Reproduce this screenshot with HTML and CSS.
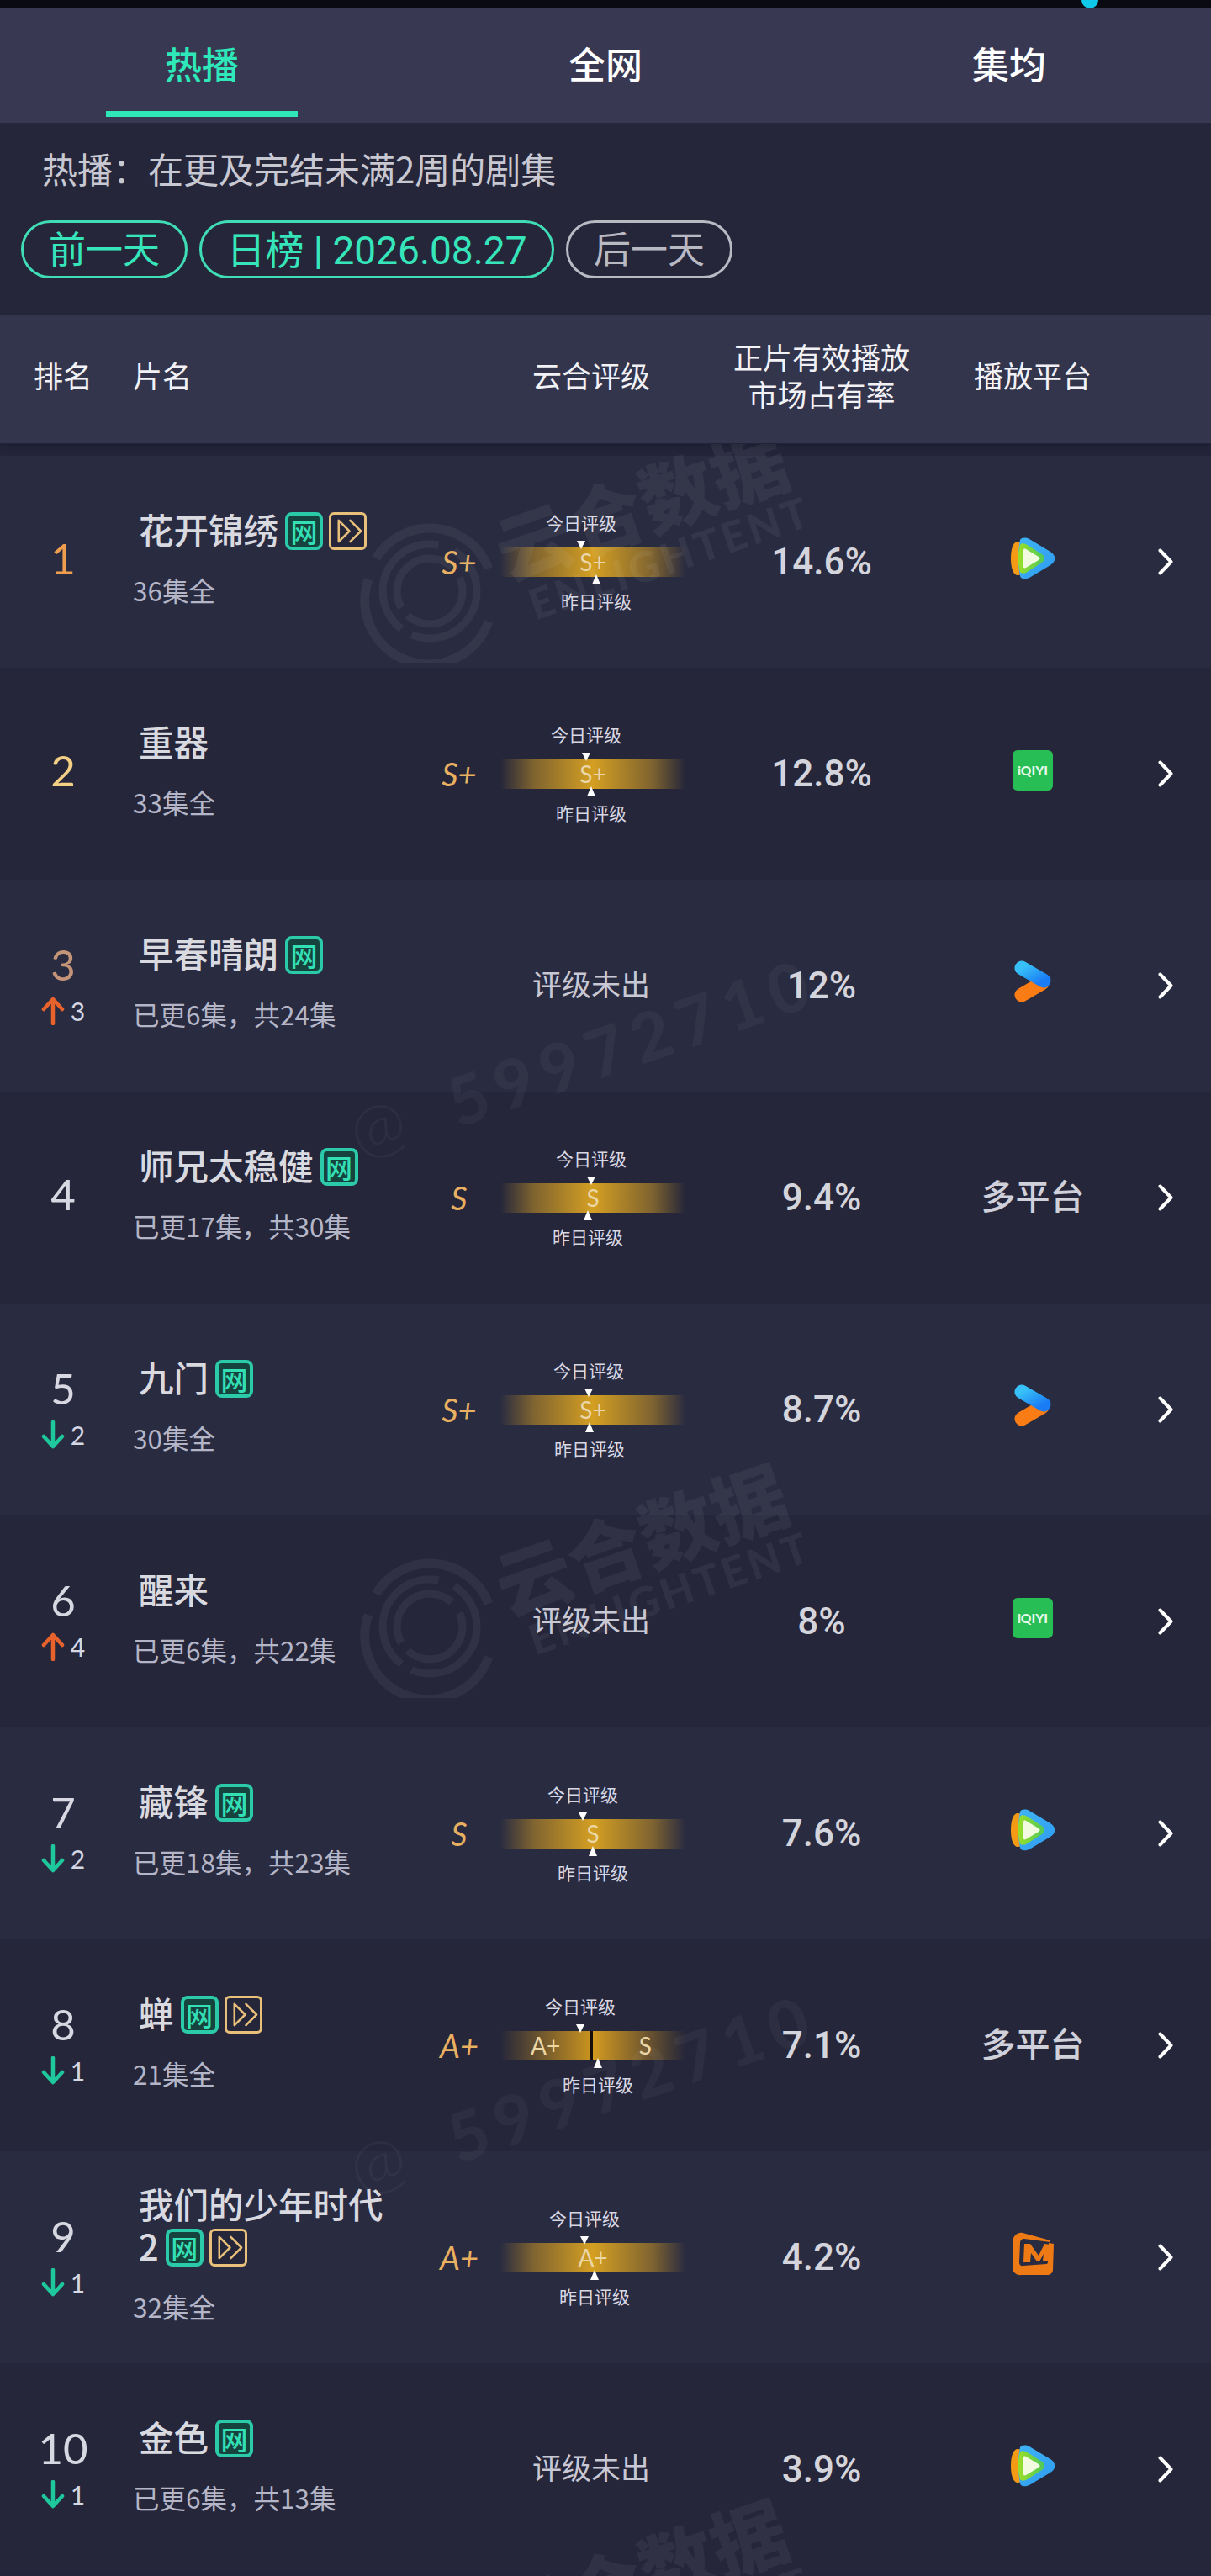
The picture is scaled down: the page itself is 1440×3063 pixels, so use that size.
FILE: index.html
```html
<!DOCTYPE html>
<html lang="zh-CN">
<head>
  <meta charset="UTF-8" />
  <title>热播榜单</title>
  <link rel="stylesheet" href="styles.css">
</head>
<body>
<svg class="defs" aria-hidden="true">
  <defs>
    <linearGradient id="tcBlue" x1="0" y1="0" x2="1" y2="1"><stop offset="0" stop-color="#3fb4f5"/><stop offset="1" stop-color="#2f9bf0"/></linearGradient>
    <linearGradient id="tcGreen" x1="0" y1="0" x2="1" y2="0"><stop offset="0" stop-color="#9adf28"/><stop offset="1" stop-color="#4fc85a"/></linearGradient>
    <linearGradient id="ykBlue" x1="0" y1="0" x2="1" y2="1"><stop offset="0" stop-color="#38c0f8"/><stop offset="1" stop-color="#1a7cf5"/></linearGradient>
    <symbol id="up" viewBox="0 0 28 34"><path d="M14 32V4M3 15 14 3l11 12" fill="none" stroke="#e8622c" stroke-width="4.500" stroke-linejoin="round" stroke-linecap="round"/></symbol>
    <symbol id="down" viewBox="0 0 28 34"><path d="M14 2v28M3 19l11 12 11-12" fill="none" stroke="#1fc79c" stroke-width="4.500" stroke-linejoin="round" stroke-linecap="round"/></symbol>
    <symbol id="skip" viewBox="0 0 40 40"><path d="M9 7l13 13L9 33ZM23 7l13 13-13 13" fill="none" stroke="#e8c07a" stroke-width="2.600" stroke-linejoin="round" stroke-linecap="round"/></symbol>
    <symbol id="chev" viewBox="0 0 18 32"><path d="M2.500 2.500 15.500 16 2.500 29.500" fill="none" stroke="#fff" stroke-width="4" stroke-linecap="round" stroke-linejoin="round"/></symbol>
    <symbol id="tencent" viewBox="0 0 54 50">
      <path d="M8 5C3 7 1 15 1 25s2 18 7 20c5 1 14-5 14-20S13 4 8 5Z" fill="#f59a14"/>
      <path d="M12 3c2-3 7-3 11-1l25 15c7 4 7 12 0 16L23 48c-5 2-10 2-11-2-3-14-3-29 0-43Z" fill="url(#tcBlue)"/>
      <path d="M12 9c1-2 4-2 7-1l19 12c4 3 4 7 0 10L19 42c-3 1-6 1-7-1-3-11-3-21 0-32Z" fill="url(#tcGreen)"/>
      <path d="M16 15c0-1 1-2 3-1l15 9c2 1 2 3 0 4l-15 9c-2 1-3 0-3-1Z" fill="#f2fbe0"/>
    </symbol>
    <symbol id="youku" viewBox="0 0 44 52">
      <path d="M9 41 33 27" fill="none" stroke="#f97c14" stroke-width="17" stroke-linecap="round"/>
      <path d="M9 9 35 24" fill="none" stroke="url(#ykBlue)" stroke-width="17" stroke-linecap="round"/>
    </symbol>
    <symbol id="mango" viewBox="0 0 50 52">
      <path d="M13 1 46 10v2L15 8c-3 0-5 2-5 5l-1 23c0 3 2 5 5 4l27-2c2 0 2-2 2-3l1-22 6 1-1 31c0 3-2 5-5 6L12 51C6 52 1 48 1 42V14C1 5 6 0 13 1Z" fill="#ee7a16"/>
      <path d="M15 14h7l10 14 7-14 7 1-2 19H37l1-8-5 9h-3l-7-10-1 11h-8Z" fill="#ee7a16"/>
    </symbol>
    <symbol id="mark" viewBox="0 0 170 170">
      <g fill="none" stroke="#fff">
        <path d="M21 46A75 75 0 0 1 155 58" stroke-width="11"/>
        <path d="M12 71A75 75 0 0 0 155 121" stroke-width="11"/>
        <circle cx="85" cy="85" r="56" stroke-width="9" stroke-dasharray="110 14 150 20"/>
        <circle cx="85" cy="85" r="39" stroke-width="9" stroke-dasharray="90 12 110 16"/>
      </g>
    </symbol>
  </defs>
</svg>

<div class="status"><i class="status-dot"></i></div>

<nav class="tabs">
  <a class="tab active">热播</a>
  <a class="tab">全网</a>
  <a class="tab">集均</a>
</nav>

<section class="intro">
  <p class="intro-text">热播：在更及完结未满2周的剧集</p>
  <div class="pills">
    <a class="pill">前一天</a>
    <a class="pill pill-date">日榜 | 2026.08.27</a>
    <a class="pill pill-off">后一天</a>
  </div>
</section>

<header class="cols">
  <div class="col-rank">排名</div>
  <div class="col-title">片名</div>
  <div class="col-rating">云合评级</div>
  <div class="col-share">正片有效播放<br>市场占有率</div>
  <div class="col-plat">播放平台</div>
</header>

<main class="list">
  <article class="cols row">
    <div class="rank"><b class="no gold1">1</b></div>
    <div class="info"><h3>花开锦绣<span class="tag tag-net">网</span><span class="tag tag-skip"><svg><use href="#skip"/></svg></span></h3><p>36集全</p></div>
    <div class="rating"><span class="grade">S+</span><div class="bar"><span>S+</span><div class="mark today" style="left:96px"><em>今日评级</em><i></i></div><div class="mark yest" style="left:114px"><i></i><em>昨日评级</em></div></div></div>
    <div class="share">14.6%</div>
    <div class="plat"><svg class="ic-tencent"><use href="#tencent"/></svg></div>
    <svg class="chev"><use href="#chev"/></svg>
  </article>

  <article class="cols row">
    <div class="rank"><b class="no gold2">2</b></div>
    <div class="info"><h3>重器</h3><p>33集全</p></div>
    <div class="rating"><span class="grade">S+</span><div class="bar"><span>S+</span><div class="mark today" style="left:102px"><em>今日评级</em><i></i></div><div class="mark yest" style="left:108px"><i></i><em>昨日评级</em></div></div></div>
    <div class="share">12.8%</div>
    <div class="plat"><span class="iqiyi">iQIYI</span></div>
    <svg class="chev"><use href="#chev"/></svg>
  </article>

  <article class="cols row">
    <div class="rank"><b class="no gold3">3</b><span class="delta"><svg><use href="#up"/></svg>3</span></div>
    <div class="info"><h3>早春晴朗<span class="tag tag-net">网</span></h3><p>已更6集，共24集</p></div>
    <div class="rating none">评级未出</div>
    <div class="share">12%</div>
    <div class="plat"><svg class="ic-youku"><use href="#youku"/></svg></div>
    <svg class="chev"><use href="#chev"/></svg>
  </article>

  <article class="cols row">
    <div class="rank"><b class="no">4</b></div>
    <div class="info"><h3>师兄太稳健<span class="tag tag-net">网</span></h3><p>已更17集，共30集</p></div>
    <div class="rating"><span class="grade">S</span><div class="bar"><span>S</span><div class="mark today" style="left:108px"><em>今日评级</em><i></i></div><div class="mark yest" style="left:104px"><i></i><em>昨日评级</em></div></div></div>
    <div class="share">9.4%</div>
    <div class="plat plat-text">多平台</div>
    <svg class="chev"><use href="#chev"/></svg>
  </article>

  <article class="cols row">
    <div class="rank"><b class="no">5</b><span class="delta"><svg><use href="#down"/></svg>2</span></div>
    <div class="info"><h3>九门<span class="tag tag-net">网</span></h3><p>30集全</p></div>
    <div class="rating"><span class="grade">S+</span><div class="bar"><span>S+</span><div class="mark today" style="left:105px"><em>今日评级</em><i></i></div><div class="mark yest" style="left:106px"><i></i><em>昨日评级</em></div></div></div>
    <div class="share">8.7%</div>
    <div class="plat"><svg class="ic-youku"><use href="#youku"/></svg></div>
    <svg class="chev"><use href="#chev"/></svg>
  </article>

  <article class="cols row">
    <div class="rank"><b class="no">6</b><span class="delta"><svg><use href="#up"/></svg>4</span></div>
    <div class="info"><h3>醒来</h3><p>已更6集，共22集</p></div>
    <div class="rating none">评级未出</div>
    <div class="share">8%</div>
    <div class="plat"><span class="iqiyi">iQIYI</span></div>
    <svg class="chev"><use href="#chev"/></svg>
  </article>

  <article class="cols row">
    <div class="rank"><b class="no">7</b><span class="delta"><svg><use href="#down"/></svg>2</span></div>
    <div class="info"><h3>藏锋<span class="tag tag-net">网</span></h3><p>已更18集，共23集</p></div>
    <div class="rating"><span class="grade">S</span><div class="bar"><span>S</span><div class="mark today" style="left:98px"><em>今日评级</em><i></i></div><div class="mark yest" style="left:110px"><i></i><em>昨日评级</em></div></div></div>
    <div class="share">7.6%</div>
    <div class="plat"><svg class="ic-tencent"><use href="#tencent"/></svg></div>
    <svg class="chev"><use href="#chev"/></svg>
  </article>

  <article class="cols row">
    <div class="rank"><b class="no">8</b><span class="delta"><svg><use href="#down"/></svg>1</span></div>
    <div class="info"><h3>蝉<span class="tag tag-net">网</span><span class="tag tag-skip"><svg><use href="#skip"/></svg></span></h3><p>21集全</p></div>
    <div class="rating"><span class="grade">A+</span><div class="bar bar-split"><span>A+</span><span>S</span><div class="mark today" style="left:95px"><em>今日评级</em><i></i></div><div class="mark yest" style="left:116px"><i></i><em>昨日评级</em></div></div></div>
    <div class="share">7.1%</div>
    <div class="plat plat-text">多平台</div>
    <svg class="chev"><use href="#chev"/></svg>
  </article>

  <article class="cols row">
    <div class="rank"><b class="no">9</b><span class="delta"><svg><use href="#down"/></svg>1</span></div>
    <div class="info"><h3>我们的少年时代2<span class="tag tag-net">网</span><span class="tag tag-skip"><svg><use href="#skip"/></svg></span></h3><p>32集全</p></div>
    <div class="rating"><span class="grade">A+</span><div class="bar"><span>A+</span><div class="mark today" style="left:100px"><em>今日评级</em><i></i></div><div class="mark yest" style="left:112px"><i></i><em>昨日评级</em></div></div></div>
    <div class="share">4.2%</div>
    <div class="plat"><svg class="ic-mango"><use href="#mango"/></svg></div>
    <svg class="chev"><use href="#chev"/></svg>
  </article>

  <article class="cols row">
    <div class="rank"><b class="no">10</b><span class="delta"><svg><use href="#down"/></svg>1</span></div>
    <div class="info"><h3>金色<span class="tag tag-net">网</span></h3><p>已更6集，共13集</p></div>
    <div class="rating none">评级未出</div>
    <div class="share">3.9%</div>
    <div class="plat"><svg class="ic-tencent"><use href="#tencent"/></svg></div>
    <svg class="chev"><use href="#chev"/></svg>
  </article>

  <!-- watermarks over the list -->
  <div class="wm" style="top:0"><svg class="wm-logo"><use href="#mark"/></svg><div class="wm-brand"><b>云合数据</b><span>ENLIGHTENT</span></div></div>
  <div class="wm" style="top:1231px"><svg class="wm-logo"><use href="#mark"/></svg><div class="wm-brand"><b>云合数据</b><span>ENLIGHTENT</span></div></div>
  <div class="wm" style="top:2462px"><svg class="wm-logo"><use href="#mark"/></svg><div class="wm-brand"><b>云合数据</b><span>ENLIGHTENT</span></div></div>
  <div class="wm-id" style="top:774px"><span>@</span>59972710</div>
  <div class="wm-id" style="top:2006px"><span>@</span>59972710</div>
</main>
</body>
</html>
```

FILE: styles.css
```css
/* Resets & page */
* { margin: 0; padding: 0; box-sizing: border-box; }
html, body {
  width: 1440px; height: 3063px; overflow: hidden;
  font-family: 'Noto Sans CJK SC', 'Noto Sans', sans-serif;
  background: #23243a; color: #fff;
}
.defs { position: absolute; width: 0; height: 0; }

/* Status strip */
.status { height: 9px; background: #0a0a12; position: relative; }
.status-dot {
  position: absolute; left: 1286px; top: -10px;
  width: 20px; height: 20px; border-radius: 50%; background: #10c8e8;
}

/* Tabs */
.tabs {
  display: grid; grid-template-columns: repeat(3, 1fr);
  height: 137px; background: #383853;
}
.tab {
  display: flex; justify-content: center;
  height: 130px; padding-top: 38px;
  font-size: 44px; line-height: 56px; font-weight: 500; color: #fff;
  position: relative;
}
.tab.active { color: #2ee8ba; }
.tab.active::after {
  content: ''; position: absolute; bottom: 0; left: 126px;
  width: 228px; height: 7px; background: #2ee8ba;
}

/* Intro block */
.intro { height: 228px; background: #25263a; padding: 26px 25px 0; }
.intro-text { font-size: 42px; line-height: 56px; color: #c8c8d2; padding-left: 25px; }
.pills { display: flex; gap: 14px; margin-top: 34px; }
.pill {
  display: flex; align-items: center; justify-content: center;
  width: 198px; height: 69px; padding-bottom: 6px;
  border: 3px solid #3fdcb6; border-radius: 35px;
  font-size: 44px; color: #36e6ba;
}
.pill-date {
  width: 422px; font-family: Roboto, 'Noto Sans CJK SC', sans-serif;
  font-size: 46px;
}
.pill-off { border-color: #b9b9c4; color: #b9b9c4; }

/* Shared columns */
.cols {
  display: grid;
  grid-template-columns: 150px 370px 330px 254px 248px 88px;
  align-items: center;
}
header.cols {
  height: 154px; padding-bottom: 10px; background: #33354d;
  border-bottom: 1px solid #22233a;
  font-size: 35px; line-height: 44px; text-align: center; color: #f2f2f6;
  box-shadow: 0 3px 6px rgba(0,0,0,.15);
  position: relative; z-index: 1;
}
header .col-title { text-align: left; padding-left: 8px; }
header .col-rating { padding-left: 36px; }

/* List */
.list { position: relative; padding-top: 14px; background: #23243a; height: 2536px; overflow: hidden; }
.row { height: 252px; }
.row:nth-of-type(odd) { background: #292b40; }
.row:nth-of-type(even) { background: #25263a; }

/* Rank */
.rank { display: flex; flex-direction: column; align-items: center; }
.no { font-family: Lato, sans-serif; font-weight: 400; font-size: 51px; line-height: 50px; color: #d8d8e2; }
.no:only-child { margin-bottom: 8px; }
.gold1 { color: #ef9d4e; }
.gold2 { color: #f4cf86; }
.gold3 { color: #c49478; }
.delta {
  display: flex; align-items: center; gap: 7px; margin-top: 10px;
  font-family: Lato, sans-serif; font-size: 30px; line-height: 40px; color: #d5d7e4;
}
.delta svg { width: 28px; height: 34px; }

/* Title */
.info { padding: 0 0 12px 8px; }
.info h3 {
  width: 305px; padding-left: 7px;
  font-size: 41.500px; line-height: 50px; font-weight: 500; color: #d9d9e0;
}
.info p { margin-top: 27px; font-size: 31.500px; line-height: 40px; color: #b4b5c6; }
.tag {
  display: inline-flex; align-items: center; justify-content: center;
  width: 45px; height: 45px; margin: 5px 0 0 8px; vertical-align: top;
  border-radius: 8px; font-size: 32px; line-height: 1; font-weight: 500;
}
.tag-net { background: #17433f; border: 4px solid #2bcbaa; color: #33e0b6; }
.tag-skip { border: 3px solid #e8c07a; border-radius: 6px; background: #25263a; margin-left: 7px; }
.tag-skip svg { width: 39px; height: 39px; }

/* Rating */
.rating { display: flex; align-items: center; padding-left: 1px; }
.rating.none { justify-content: center; padding: 0 0 8px 36px; font-size: 35px; color: #c8c8d4; }
.grade {
  width: 50px; margin-right: 24px; text-align: center;
  font-family: Lato, sans-serif; font-style: italic; font-size: 38px; color: #e8b060;
}
.bar {
  position: relative; display: flex; align-items: center; justify-content: center;
  width: 220px; height: 35px;
  background: linear-gradient(90deg, rgba(150,115,45,0) 0%, rgba(150,115,45,.8) 18%, #d49f22 50%, rgba(150,115,45,.8) 82%, rgba(150,115,45,0) 100%);
  font-family: Lato, sans-serif; font-size: 28px; color: #ebd6a6;
}
.bar-split {
  justify-content: space-between; padding: 0 40px 0 36px;
  background: linear-gradient(90deg, rgba(150,115,45,0) 0%, #c8921f 48.600%, #170f0c 48.600%, #170f0c 50.200%, #d49a20 50.200%, rgba(150,115,45,0) 100%);
}
.mark {
  position: absolute; transform: translateX(-50%);
  display: flex; flex-direction: column; align-items: center; white-space: nowrap;
}
.mark em {
  font-family: 'Noto Sans CJK SC', sans-serif; font-style: normal;
  font-size: 21px; line-height: 30px; color: #d8d8e4;
}
.mark i { display: block; width: 0; height: 0; border-left: 5px solid transparent; border-right: 5px solid transparent; }
.today { bottom: calc(100% - 2px); }
.today i { margin-top: 7px; border-top: 10px solid #fff; }
.yest { top: calc(100% - 3px); }
.yest i { margin-bottom: 4px; border-bottom: 12px solid #fff; }

/* Share, platform, arrow */
.share { text-align: center; font-family: Roboto, sans-serif; font-weight: 500; font-size: 44px; color: #d4d4dc; }
.plat { display: flex; justify-content: center; padding-bottom: 8px; }
.plat-text { padding-bottom: 8px; font-size: 41px; font-weight: 500; color: #d0d0da; }
.ic-tencent { width: 54px; height: 50px; }
.ic-youku { width: 44px; height: 52px; }
.ic-mango { width: 50px; height: 52px; }
.iqiyi {
  display: flex; align-items: center; justify-content: center;
  width: 48px; height: 48px; border-radius: 6px; background: #27bf55;
  font-family: Lato, sans-serif; font-size: 15.500px; font-weight: 900; color: #e8f8ea;
}
.chev { width: 18px; height: 32px; margin-left: 25px; }

/* Watermarks */
.wm { position: absolute; left: 0; width: 1000px; height: 320px; pointer-events: none; }
.wm-logo { position: absolute; left: 426px; top: 90px; width: 170px; height: 170px; opacity: .05; }
.wm-brand {
  position: absolute; left: 591px; top: 82px;
  transform: rotate(-19deg); transform-origin: 0 45px;
  color: rgba(255,255,255,.055); white-space: nowrap;
}
.wm-brand b { display: block; font-size: 90px; line-height: 90px; font-weight: 900; }
.wm-brand span {
  display: block; margin: 3px 0 0 16px;
  font-family: Lato, sans-serif; font-weight: 900; font-size: 50px; line-height: 52px; letter-spacing: 4px;
}
.wm-id {
  position: absolute; left: 418px; pointer-events: none;
  transform: rotate(-19deg); transform-origin: left center;
  font-family: Lato, sans-serif; font-weight: 900; font-size: 80px; line-height: 100px; letter-spacing: 11px;
  color: rgba(255,255,255,.04); white-space: nowrap;
}
.wm-id span { display: inline-block; transform: translateY(-4px); font-weight: 300; margin-right: 46px; }
```
